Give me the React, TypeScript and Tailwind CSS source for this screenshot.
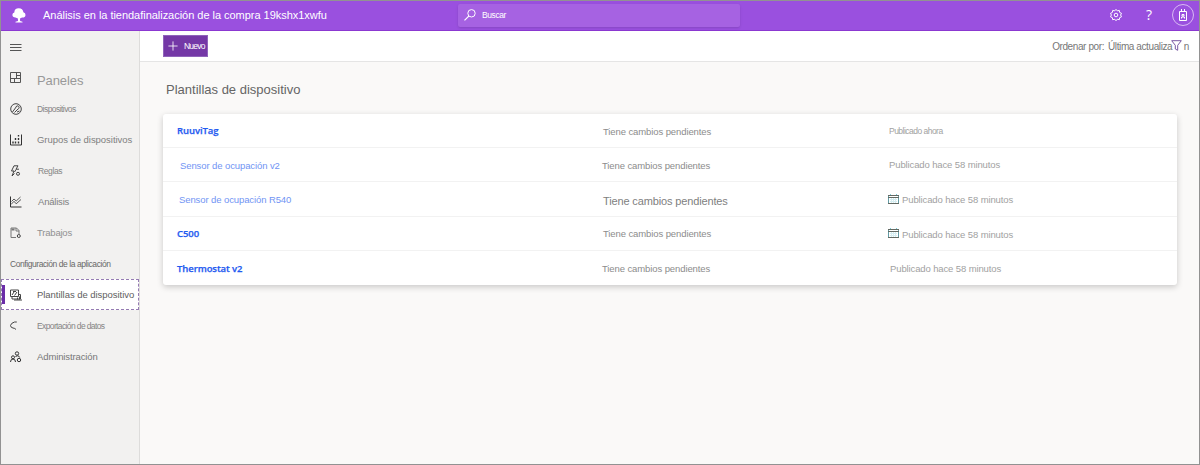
import type { ReactNode } from "react";

function Icon({ children, className = "" }: { children: ReactNode; className?: string }) {
  return (
    <svg viewBox="0 0 12 12" fill="none" stroke="currentColor" strokeWidth="1" className={`size-3 shrink-0 overflow-visible ${className}`}>
      {children}
    </svg>
  );
}

const icons = {
  dashboard: (
    <Icon className="text-[#555]">
      <path d="M.5.5h10v10h-10zM6.500 .5v6M.5 6.500h10M6.500 3.500h4M4.500 6.500v4" />
    </Icon>
  ),
  devices: (
    <Icon className="text-[#444]">
      <circle cx="6" cy="6" r="5.300" />
      <path d="M2.500 9l4-5.500M6 4a1.600 1.600 0 1 1 2 2L4.500 9.500M7 9l2.500-1" />
    </Icon>
  ),
  groups: (
    <Icon className="text-[#333]">
      <path d="M.5.500v10.500H11.500V.5" />
      <path d="M3 7.500v2M5.500 7.500v2M8.500 7.500v2M5.500 4v2M8.500 4v2M8.500 1v1.500" strokeWidth="1.400" />
    </Icon>
  ),
  rules: (
    <Icon className="text-[#444]">
      <path d="M4 .8h4L6 4.200h3M4 .8L1.500 6H4L2 11l2.500-2.500M6 4.500L4.500 7" />
      <circle cx="8" cy="8.800" r="1.500" />
    </Icon>
  ),
  analytics: (
    <Icon className="text-[#333]">
      <path d="M.5.500v10.500H11.500" />
      <path d="M1 8.500l3-3.200 2.200 2.500L11 3.500M1.500 5.500l2.500-2.500 2.200 2L10.500 1" strokeWidth=".8" />
    </Icon>
  ),
  jobs: (
    <Icon className="text-[#777]">
      <path d="M6 10.500H1V1h5.500L9 3.500V7M6 1v3h3" />
      <path d="M1.500 2.500h3" strokeWidth="2" />
      <circle cx="8.800" cy="9" r="1.500" stroke="#444" />
    </Icon>
  ),
  templates: (
    <Icon className="text-[#444]">
      <path d="M.5 1h8v6.500h-8zM2 8v2h8.500V5.500H9M4 11h8" />
      <path d="M2 6l2-3M4.500 6.500L7 3M3 2.500h3M7.500 8.500v2M9.500 7.500v3" />
    </Icon>
  ),
  exporting: (
    <Icon className="text-[#444]">
      <path d="M6.800 2H4.500Q1 3 .5 5.500q.3 2.300 2.500 2.500 2 .2 3 1.500" />
    </Icon>
  ),
  admin: (
    <Icon className="text-[#333]">
      <circle cx="7" cy="2.500" r="1.700" />
      <circle cx="3" cy="6.300" r="1.500" />
      <path d="M.5 11Q.6 8 3 8t2.500 3M5.500 6Q6 4.800 7.500 4.800 9.500 5 9.700 6.500" />
      <circle cx="9" cy="9" r="1.700" />
    </Icon>
  ),
};

function NavItem({ icon, label, text }: { icon: ReactNode; label: string; text: string }) {
  return (
    <li className="flex h-[31px] items-center pl-[9px]">
      {icon}
      <span className={text}>{label}</span>
    </li>
  );
}

function CalendarIcon() {
  return (
    <svg viewBox="0 0 11 11" fill="none" className="mr-[3px] size-[11px] shrink-0">
      <path d="M2 5.500h7M2 7.500h7M3.500 4v5M5.500 4v5M7.500 4v5" stroke="#d5edf1" />
      <path d="M.5 1.500v8M10.500 1.500v8" stroke="#639ca5" />
      <path d="M0 1.500h11M0 3.500h11M0 9.500h11" stroke="#626962" />
      <path d="M2.500 0v1M8.500 0v1" stroke="#7ccddb" />
    </svg>
  );
}

const bold = "font-['Open_Sans'] text-[9.5px] font-semibold tracking-[-0.08px] text-[#1f5bf0] [-webkit-text-stroke:0.25px_#1f5bf0] pl-[14px] pt-px";
const light = "text-[9.5px] text-[#7194f4] pt-[2px] tracking-[-0.1px]";
const status = "text-[9.5px] tracking-[-0.1px] text-[#8c8c8c]";
const ago = "text-[9.5px] tracking-[-0.12px] pt-px";

const rows = [
  { name: "RuuviTag", nameClass: bold, state: `${status} pl-[2px] pt-[2px]`, published: "Publicado ahora", time: "pl-[1px] pt-px tracking-[-0.52px] text-[8.5px]", calendar: false, height: "h-[34px]" },
  { name: "Sensor de ocupación v2", nameClass: `${light} pl-[17px]`, state: `${status} pl-[1px] pt-[2px]`, published: "Publicado hace 58 minutos", time: `${ago} pl-[1px]`, calendar: false, height: "h-[34px]" },
  { name: "Sensor de ocupación R540", nameClass: `${light} pl-[16px]`, state: "pl-[2px] pt-[4px] text-[11px] tracking-[-0.14px] text-[#808080]", published: "Publicado hace 58 minutos", time: ago, calendar: true, height: "h-[35px]" },
  { name: "C500", nameClass: bold, state: `${status} pl-[2px]`, published: "Publicado hace 58 minutos", time: "text-[9.5px] tracking-[-0.12px] pt-[3px]", calendar: true, height: "h-[34px]" },
  { name: "Thermostat v2", nameClass: bold, state: `${status} pl-[1px] pt-[2px]`, published: "Publicado hace 58 minutos", time: `${ago} pl-[2px]`, calendar: false, height: "h-[34px]" },
];

export default function App() {
  return (
    <div className="flex h-[465px] w-[1200px] flex-col overflow-hidden whitespace-nowrap border border-[#929292] bg-[#faf9f8] font-['Liberation_Sans',sans-serif] text-[9px] leading-none">
      <header className="flex h-[30px] shrink-0 items-center border-b border-[#8b38d1] bg-[#9a50df] text-white">
        <svg viewBox="0 0 14 15" fill="white" className="ml-[11px] h-[15px] w-[14px] shrink-0">
          <path d="M3.500 9.500Q.4 9.500.4 6.800.5 4.700 2.300 4.400 2.500.4 6.800.3q4 0 4.600 3.900 2.200.5 2.100 2.700-.2 2.700-3.500 2.600L8 10.400l.1 2.600 2.400.7v.7h-7v-.7L6 13l-.1-2.600z" />
        </svg>
        <h1 className="ml-[17px] w-[415px] text-[11px] tracking-[-0.03px]">Análisis en la tiendafinalización de la compra 19kshx1xwfu</h1>
        <div className="flex h-[23px] w-[282px] items-center rounded-xs bg-[#a662e2] pl-[6px] shadow-sm">
          <Icon className="-mt-px">
            <circle cx="7.500" cy="4.300" r="3.700" />
            <path d="M5 6.800L.5 11.300" strokeWidth="1.200" />
          </Icon>
          <span className="ml-[6px] text-[8.5px] tracking-[-0.4px]">Buscar</span>
        </div>
        <div className="ml-auto flex items-center">
          <Icon className="-mt-[2px]">
            <path d="M6 .4l1.300 1.500 2-.5.3 2 1.900.9L10.600 6l.9 1.800-1.900.9-.3 2-2-.5L6 11.700l-1.300-1.500-2 .5-.3-2-1.900-.9L1.400 6 .5 4.300l1.900-.9.3-2 2 .5z" />
            <circle cx="6" cy="6" r="1.800" />
          </Icon>
          <span className="-mt-[2px] ml-[24px] font-['Open_Sans'] text-[14px]">?</span>
          <span className="-mt-px ml-[20px] mr-[5px] flex size-[22px] items-center justify-center rounded-full border border-[#d9b9f3]">
            <svg viewBox="0 0 10 12" fill="none" stroke="white" className="h-3 w-[10px]">
              <path d="M1.500 2.500h7v9h-7zM3.500 0v3M6.500 0v3M3.500 9.500V8h3v1.500M4 5.500h2V7H4z" />
            </svg>
          </span>
        </div>
      </header>

      <div className="flex min-h-0 grow">
        <nav className="w-[139px] shrink-0 border-r border-[#dddcdb] bg-[#f2f1f0]">
          <div className="flex h-[31px] items-center pl-[9px]">
            <Icon className="text-[#555]">
              <path d="M0 3.500h11.500M0 6.500h11.500M0 9.500h11.500" />
            </Icon>
          </div>
          <ul>
            <NavItem icon={icons.dashboard} label="Paneles" text="pl-[15px] pt-[5px] text-[13px] tracking-[-0.1px] text-[#999]" />
            <NavItem icon={icons.devices} label="Dispositivos" text="pl-[15px] pt-[2px] text-[8.5px] tracking-[-0.55px] text-[#858585]" />
            <NavItem icon={icons.groups} label="Grupos de dispositivos" text="pl-[15px] pt-px text-[9.5px] tracking-[-0.04px] text-[#808080]" />
            <NavItem icon={icons.rules} label="Reglas" text="pl-[16px] pt-px text-[8.5px] tracking-[-0.4px] text-[#858585]" />
            <NavItem icon={icons.analytics} label="Análisis" text="pl-[16px] pt-px text-[9.5px] tracking-[-0.2px] text-[#808080]" />
            <NavItem icon={icons.jobs} label="Trabajos" text="pl-[15px] text-[9.5px] tracking-[-0.2px] text-[#909090]" />
          </ul>
          <h2 className="flex h-[31px] items-center pl-[9px] pt-[2px] text-[8.5px] tracking-[-0.43px] text-[#686868]">Configuración de la aplicación</h2>
          <ul>
            <li className="flex h-[31px] items-center border border-dashed border-[#957bb3] bg-white">
              <span className="h-[19px] w-[3px] bg-[#6b2da8]" />
              <span className="ml-[5px]">{icons.templates}</span>
              <span className="pl-[15px] pt-px text-[9.5px] tracking-[-0.04px] text-[#606060]">Plantillas de dispositivo</span>
            </li>
            <NavItem icon={icons.exporting} label="Exportación de datos" text="pl-[15px] pt-[2px] text-[8.5px] tracking-[-0.62px] text-[#858585]" />
            <NavItem icon={icons.admin} label="Administración" text="pl-[15px] pt-px text-[9.5px] tracking-[-0.12px] text-[#777]" />
          </ul>
        </nav>

        <main className="min-w-0 grow">
          <div className="flex h-[31px] items-center border-b border-[#e5e5e5] bg-white pl-[23px] pr-[10px]">
            <button className="flex h-[22px] w-[45px] items-center border border-[#8f64ba] bg-[#7438a6] pl-1 text-white">
              <Icon className="!size-[10px]">
                <path d="M6 .5v11M.5 6h11" />
              </Icon>
              <span className="pl-[6px] pt-px text-[8.5px] tracking-[-0.8px]">Nuevo</span>
            </button>
            <div className="relative ml-auto flex pt-[2px] text-[10px] tracking-[-0.4px] text-[#777]">
              <span>Ordenar por:</span>
              <span className="ml-[4px]">
                Última actualiza<span className="text-transparent">ció</span>n
              </span>
              <svg viewBox="0 0 11 12" fill="white" stroke="#7959a2" className="absolute right-[7px] top-0 h-3 w-[11px]">
                <path d="M.7.700h9.600L6.700 5.300v5L4.300 9V5.300z" />
              </svg>
            </div>
          </div>

          <h2 className="flex h-[52px] items-center pl-[26px] pt-[2px] text-[13px] text-[#656565]">Plantillas de dispositivo</h2>

          <section className="ml-[23px] w-[1014px] rounded-[3px] bg-white shadow-[0_2px_6px_rgba(0,0,0,0.2)]">
            {rows.map((row) => (
              <div key={row.name} className={`grid grid-cols-[438px_287px_1fr] items-center border-b border-[#f2f2f2] last:border-0 ${row.height}`}>
                <a className={row.nameClass}>{row.name}</a>
                <span className={row.state}>Tiene cambios pendientes</span>
                <span className="flex items-center text-[#a1a1a1]">
                  {row.calendar && <CalendarIcon />}
                  <span className={row.time}>{row.published}</span>
                </span>
              </div>
            ))}
          </section>
        </main>
      </div>
    </div>
  );
}
